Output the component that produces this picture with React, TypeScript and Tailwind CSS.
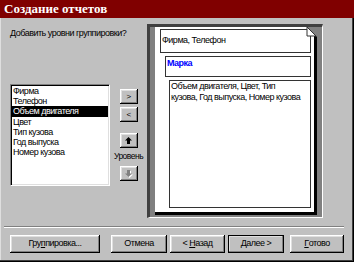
import React from 'react';

const items = ['Фирма', 'Телефон', 'Объем двигателя', 'Цвет', 'Тип кузова', 'Год выпуска', 'Номер кузова'];

const raised =
	'bg-[#c0c0c0] shadow-[inset_-1px_-1px_0_#000,inset_1px_1px_0_#fff,inset_-2px_-2px_0_#808080,inset_2px_2px_0_#dfdfdf]';

const SmallButton = ({ children }: { children: React.ReactNode }) => (
	<div className={`w-[18px] h-[15px] flex items-center justify-center text-[8px] leading-none ${raised}`}>
		{children}
	</div>
);

const Button = ({ children, width, main }: { children: React.ReactNode; width: string; main?: boolean }) => (
	<div
		className={`${width} h-[18px] flex items-center justify-center text-[9px] ${raised} ${
			main ? 'outline outline-1 outline-black -outline-offset-1' : ''
		}`}
	>
		{children}
	</div>
);

const App = () => {
	return (
		<div className="w-[354px] h-[262px] flex flex-col bg-[#c0c0c0] font-['Liberation_Sans',Arial,sans-serif] tracking-[-0.5px] text-black shadow-[inset_-1px_-1px_0_#000,inset_-2px_-2px_0_#404040,inset_1px_0_0_#dfdfdf]">
			<div className="h-[18px] bg-[#800000] flex items-center pl-[4px] text-white font-bold text-[13px] tracking-normal font-['Liberation_Serif',serif]">
				Создание отчетов
			</div>

			<div className="mt-[6px] h-[194px] flex">
				<div className="ml-[10px] w-[100px] flex flex-col">
					<div className="mt-[3px] h-[12px] text-[9px] leading-[12px] whitespace-nowrap">
						Добавить уровни группировки?
					</div>
					<div className="mt-[45px] h-[102px] bg-white border border-t-[#808080] border-l-[#808080] border-r-white border-b-white shadow-[inset_1px_1px_0_#000,inset_-1px_-1px_0_#dfdfdf] pt-[1px] px-[1px]">
						{items.map((item, i) => (
							<div
								key={item}
								className={`h-[10.2px] text-[9px] leading-[10.2px] pl-[1px] whitespace-nowrap ${
									i === 2 ? 'bg-black text-white' : ''
								}`}
							>
								{item}
							</div>
						))}
					</div>
				</div>

				<div className="w-[37px] flex flex-col items-center">
					<div className="mt-[65px]">
						<SmallButton>&gt;</SmallButton>
					</div>
					<div className="mt-[3px]">
						<SmallButton>&lt;</SmallButton>
					</div>
					<div className="mt-[11px]">
						<SmallButton>
							<svg width="7" height="7" viewBox="0 0 7 7">
								<polygon points="3.5,0 7,3.5 5,3.5 5,7 2,7 2,3.5 0,3.5" fill="#000" />
							</svg>
						</SmallButton>
					</div>
					<div className="mt-[2px] h-[12px] text-[8.5px] leading-[12px] whitespace-nowrap">Уровень</div>
					<div className="mt-[4px]">
						<SmallButton>
							<svg width="8" height="8" viewBox="0 0 8 8">
								<polygon points="4.5,8 8,4.5 6,4.5 6,1 3,1 3,4.5 1,4.5" fill="#fff" />
								<polygon points="3.5,7 7,3.5 5,3.5 5,0 2,0 2,3.5 0,3.5" fill="#808080" />
							</svg>
						</SmallButton>
					</div>
				</div>

				<div className="w-[176px] h-[194px] flex bg-[#808080] border-t-[3px] border-l-[3px] border-r border-b border-t-[#404040] border-l-[#404040] border-r-white border-b-white pl-[5px] pr-[5px] pb-[2px]">
					<div className="relative flex-1 flex flex-col bg-white border-r-[3px] border-b-[3px] border-black text-[9px]">
						<div className="mt-[2px] ml-[5px] mr-[3px] h-[24px] border border-[#333] pl-[1px] pt-[5px] leading-[11px]">
							Фирма, Телефон
						</div>
						<div className="mt-[3px] ml-[10px] mr-[3px] h-[21px] border border-[#333] pl-[1px] pt-[1px] leading-[11px] font-bold text-[#0000ff]">
							Марка
						</div>
						<div className="mt-[3px] ml-[14px] mr-[3px] h-[128px] border border-[#333] pl-[1px] leading-[11px] whitespace-nowrap">
							Объем двигателя, Цвет, Тип
							<br />
							кузова, Год выпуска, Номер кузова
						</div>
						<svg className="absolute top-0 right-[-3px]" width="12" height="11" viewBox="0 0 12 11">
							<polygon points="2,0 12,0 12,10" fill="#808080" />
							<polygon points="2,0 2,9 11,9" fill="#fff" stroke="#333" strokeWidth="1" />
						</svg>
					</div>
				</div>
			</div>

			<div className="mt-[8px] ml-[4px] mr-[10px] h-[2px] border-t border-t-[#808080] border-b border-b-white" />

			<div className="mt-[7px] flex pl-[10px]">
				<Button width="w-[90px]">
					Гру<span className="underline">п</span>пировка...
				</Button>
				<div className="ml-[11px]">
					<Button width="w-[56px]">Отмена</Button>
				</div>
				<div className="ml-[3px]">
					<Button width="w-[55px]">
						&lt;&nbsp;<span className="underline">Н</span>азад
					</Button>
				</div>
				<div className="ml-[3px]">
					<Button width="w-[56px]" main>
						<span className="underline">Д</span>алее&nbsp;&gt;
					</Button>
				</div>
				<div className="ml-[6px]">
					<Button width="w-[54px]">
						<span className="underline">Г</span>отово
					</Button>
				</div>
			</div>
		</div>
	);
};

export default App;
